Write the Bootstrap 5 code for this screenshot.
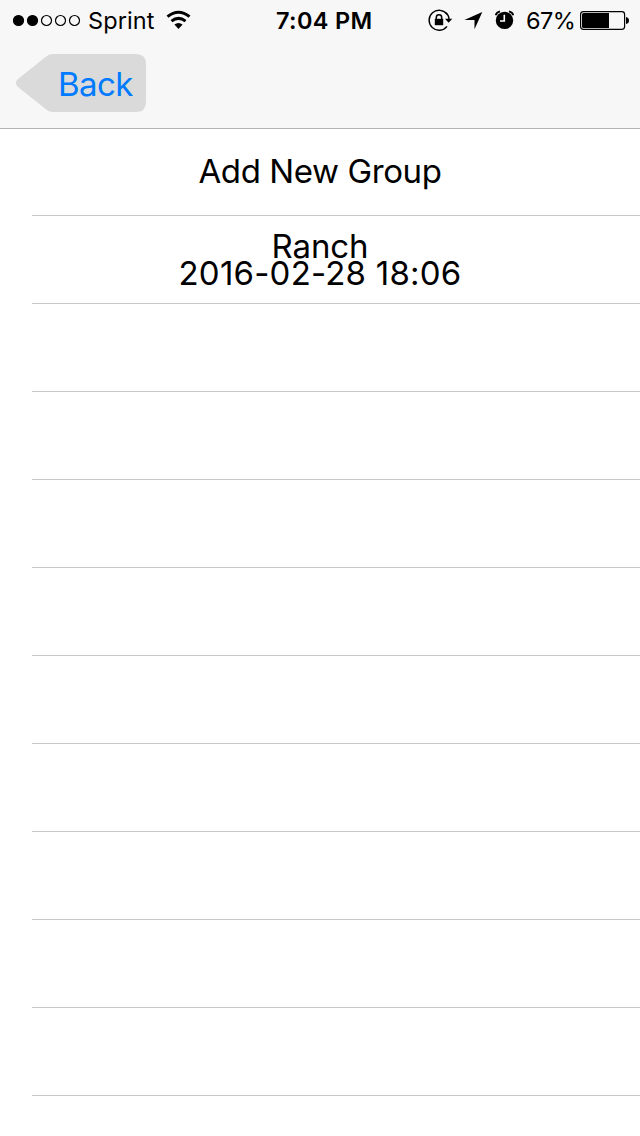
<!DOCTYPE html>
<html lang="en">
<head>
<meta charset="utf-8">
<meta name="viewport" content="width=device-width, initial-scale=1">
<title>Groups</title>
<link href="https://cdn.jsdelivr.net/npm/bootstrap@5.3.0/dist/css/bootstrap.min.css" rel="stylesheet">
<style>
body{font-family:Inter,"Liberation Sans",sans-serif;font-size:33px;line-height:27px;color:#000;background:#fff;height:1136px;overflow:hidden}
svg{display:block;flex:none}
.top-area{height:129px;background:#f7f7f7;border-bottom:1px solid #b2b2b2}
.status{height:40px;font-size:23.5px;line-height:38px;padding-left:12px;padding-right:11px}
.status span{padding-top:2px}
.carrier{width:69px;margin-left:7px;margin-right:9px;letter-spacing:.1px}
.clock{width:100px;margin-left:84px;font-weight:600;letter-spacing:.35px}
.percent{width:53px;margin-left:9px;letter-spacing:-.6px}
.back-btn{width:131px;height:58px;margin:14px 0 0 15px;color:#007aff}
.back-shape{left:0;top:0}
.back-label{padding-left:43px;line-height:60px;letter-spacing:-.6px}
.table-rows{padding-left:32px}
.cell{height:88px;padding:0 32px 0 0;border:0;border-bottom:1px solid #c8c7cc;border-radius:0!important;background:none;color:#000}
.cell:first-child{height:87px}
.cell-one{line-height:84px;letter-spacing:-.4px}
.cell-two{padding-top:17px}
.group-name{letter-spacing:-.1px}
.group-date{letter-spacing:.22px}
</style>
</head>
<body>
<header class="top-area">
  <div class="status d-flex align-items-center text-nowrap">
    <svg width="69" height="40" viewBox="12 0 69 40"><g stroke="#000" stroke-width="1.2"><circle cx="18.5" cy="20.5" r="5"/><circle cx="32.5" cy="20.5" r="5"/><g fill="none"><circle cx="46.5" cy="20.5" r="5"/><circle cx="60.5" cy="20.5" r="5"/><circle cx="74.5" cy="20.5" r="5"/></g></g></svg>
    <span class="carrier">Sprint</span>
    <svg width="26" height="40" viewBox="166 0 26 40"><g fill="none" stroke="#000" stroke-width="3"><path d="M167.500 16.700Q178.500 7.700 189.500 16.700"/><path d="M171.500 21.200Q178.500 15.500 185.500 21.200"/></g><path d="M174.400 24.600Q178.500 21.600 182.600 24.600L178.500 29Z"/></svg>
    <span class="clock">7:04 PM</span>
    <svg class="ms-auto" width="90" height="40" viewBox="427 0 90 40">
      <path d="M447.200 14.400A10 10 0 1 0 447 26.400" fill="none" stroke="#000" stroke-width="1.4"/>
      <path d="M445.400 12.400Q448.800 15 449 19" fill="none" stroke="#000" stroke-width="1.4"/>
      <path d="M445 18.700H452.300L448.600 22.700Z"/>
      <path d="M434.800 18.800H443.200V25.200H434.800Z"/><path d="M436.300 19V17.500a2.700 2.700 0 0 1 5.400 0V19" fill="none" stroke="#000" stroke-width="1.5"/>
      <path d="M482.300 12L474.500 29.200V20H464.400Z"/>
      <circle cx="504.500" cy="20.400" r="8.700"/>
      <path d="M495.700 15.200Q496.500 12.300 500 11.400M509 11.400Q512.500 12.300 513.300 15.200" fill="none" stroke="#000" stroke-width="1.700"/>
      <path d="M504.300 14.800V21H500" fill="none" stroke="#fff" stroke-width="1.6"/>
    </svg>
    <span class="percent">67%</span>
    <svg width="50" height="40" viewBox="579 0 50 40"><rect x="580.600" y="11.600" width="44" height="17.800" rx="2.800" fill="none" stroke="#000" stroke-width="1.2"/><path d="M583.500 13H609V28H583.500Q582 28 582 26.500V14.500Q582 13 583.500 13Z"/><path d="M626 17Q629 17.500 629 20.500T626 24Z"/></svg>
  </div>
  <a href="#" class="back-btn d-block position-relative text-decoration-none">
    <svg class="back-shape position-absolute" width="131" height="58" viewBox="0 0 131 58"><path fill="#dadada" d="M38 0H121Q131 0 131 10V48Q131 58 121 58H38Q34.500 58 31.500 55.700L3 33Q-1.500 29 3 25L31.500 2.300Q34.500 0 38 0Z"/></svg>
    <span class="back-label d-block position-relative">Back</span>
  </a>
</header>
<main class="table-rows list-group text-center">
  <div class="list-group-item cell cell-one">Add New Group</div>
  <div class="list-group-item cell cell-two"><div class="group-name">Ranch</div><div class="group-date">2016-02-28 18:06</div></div>
  <div class="list-group-item cell"></div>
  <div class="list-group-item cell"></div>
  <div class="list-group-item cell"></div>
  <div class="list-group-item cell"></div>
  <div class="list-group-item cell"></div>
  <div class="list-group-item cell"></div>
  <div class="list-group-item cell"></div>
  <div class="list-group-item cell"></div>
  <div class="list-group-item cell"></div>
</main>
<script src="https://cdn.jsdelivr.net/npm/bootstrap@5.3.0/dist/js/bootstrap.bundle.min.js"></script>
</body>
</html>
